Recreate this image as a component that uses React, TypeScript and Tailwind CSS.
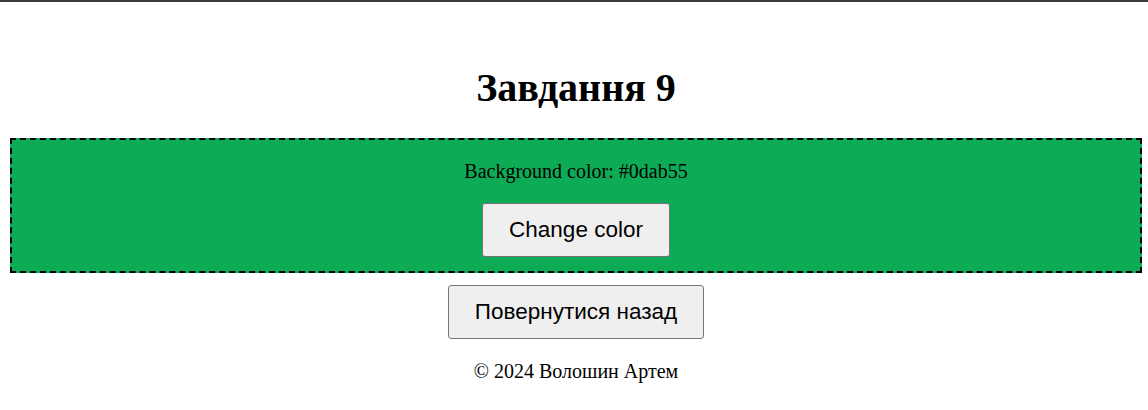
export default function App() {
  return (
    <div className="min-h-[410px] bg-white pl-[4px] font-['Liberation_Serif','Times_New_Roman',serif] text-black">
      {/* top edge */}
      <div className="-ml-[4px] h-[2px] bg-[#3c3c3c]" />

      <h1 className="mt-[63px] text-center text-[40px] font-bold leading-[46px]">Завдання 9</h1>

      <div className="mx-[6px] mt-[27px] flex flex-col items-center border-2 border-dashed border-black bg-[#0dab55] pt-[20px] pb-[14px]">
        <p className="text-[20px] leading-[23px]">Background color: #0dab55</p>
        <button className="mt-[20px] h-[54px] rounded-[3px] border border-[#767676] bg-[#efefef] px-[26px] font-['Liberation_Sans',Arial,sans-serif] text-[22.5px] leading-[26px]">
          Change color
        </button>
      </div>

      <div className="mt-[12px] flex flex-col items-center">
        <button className="h-[54px] rounded-[3px] border border-[#767676] bg-[#efefef] px-[26px] font-['Liberation_Sans',Arial,sans-serif] text-[22.5px] leading-[26px]">
          Повернутися назад
        </button>
        <p className="mt-[21px] text-[20px] leading-[23px]">© 2024 Волошин Артем</p>
      </div>
    </div>
  )
}
